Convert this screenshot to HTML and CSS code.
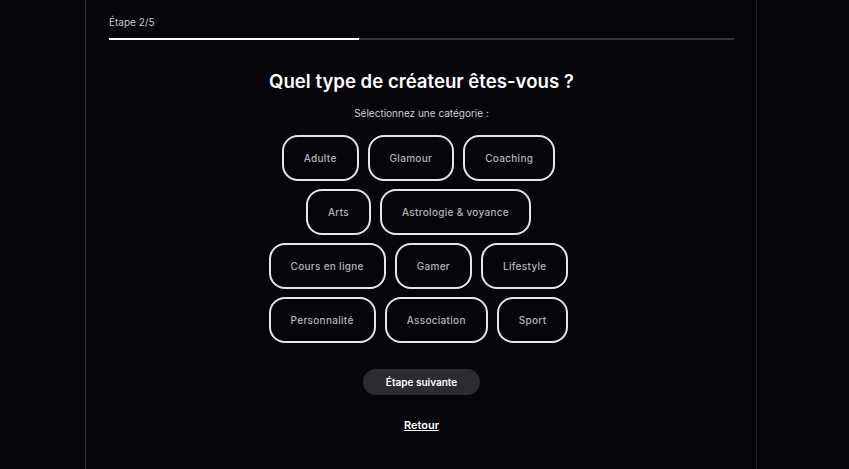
FILE: index.html
```html
<!DOCTYPE html>
<html lang="fr">

<head>
    <meta charset="UTF-8">
    <meta name="viewport" content="width=device-width, initial-scale=1.0">
    <title>Inscription créateur</title>
    <link rel="stylesheet" href="styles.css">
</head>

<body>

    <div class="panel">
        <div class="step">
            <span class="step-label">Étape 2/5</span>
            <div class="progress">
                <div class="progress-fill" style="width: 40%"></div>
            </div>
        </div>

        <h1>Quel type de créateur êtes-vous ?</h1>
        <p class="subtitle">Sélectionnez une catégorie :</p>

        <div class="categories">
            <div class="chip-row">
                <button class="chip">Adulte</button>
                <button class="chip">Glamour</button>
                <button class="chip">Coaching</button>
            </div>
            <div class="chip-row">
                <button class="chip">Arts</button>
                <button class="chip">Astrologie &amp; voyance</button>
            </div>
            <div class="chip-row">
                <button class="chip">Cours en ligne</button>
                <button class="chip">Gamer</button>
                <button class="chip">Lifestyle</button>
            </div>
            <div class="chip-row">
                <button class="chip">Personnalité</button>
                <button class="chip">Association</button>
                <button class="chip">Sport</button>
            </div>
        </div>

        <button class="next-btn">Étape suivante</button>
        <a class="back-link" href="#">Retour</a>
    </div>

</body>

</html>
```

FILE: styles.css
```css
body {
    font-family: Inter, "Open Sans", sans-serif;
    margin: 0;
    padding: 0;
    background: #05050a;
    color: white;
}

.panel {
    width: 672px;
    height: 469px;
    margin-left: 85px;
    padding: 16px 22px 0 23px;
    box-sizing: border-box;
    border-left: 1px solid #2e2e35;
    border-right: 1px solid #1c1c22;
    display: flex;
    flex-direction: column;
    align-items: center;
}

.step {
    width: 100%;
}

.step-label {
    display: block;
    font-size: 10px;
    color: #c8c8cc;
    margin-bottom: 10px;
}

.progress {
    height: 2px;
    background: #34343c;
}

.progress-fill {
    height: 100%;
    background: white;
}

h1 {
    font-size: 18.6px;
    font-weight: 600;
    margin: 30px 0 0;
}

.subtitle {
    font-size: 10px;
    color: #d0d0d4;
    margin: 15px 0 0;
}

.categories {
    margin: 16px 6px 0 0;
    display: flex;
    flex-direction: column;
    align-items: center;
    gap: 8px;
}

.chip-row {
    display: flex;
    justify-content: center;
    gap: 9px;
}

.chip {
    height: 46px;
    padding: 0 20px;
    background: transparent;
    border: 2px solid #e6e6e8;
    border-radius: 16px;
    color: #b4b4b8;
    font-family: inherit;
    font-size: 10px;
    font-weight: 500;
    letter-spacing: 0.3px;
    cursor: pointer;
}

.next-btn {
    margin-top: 26px;
    width: 117px;
    height: 26px;
    border: none;
    border-radius: 13px;
    background: #2b2b30;
    color: white;
    font-family: inherit;
    font-size: 10px;
    font-weight: 600;
    cursor: pointer;
}

.back-link {
    margin-top: 23px;
    font-size: 11px;
    font-weight: 600;
    color: white;
}
```
